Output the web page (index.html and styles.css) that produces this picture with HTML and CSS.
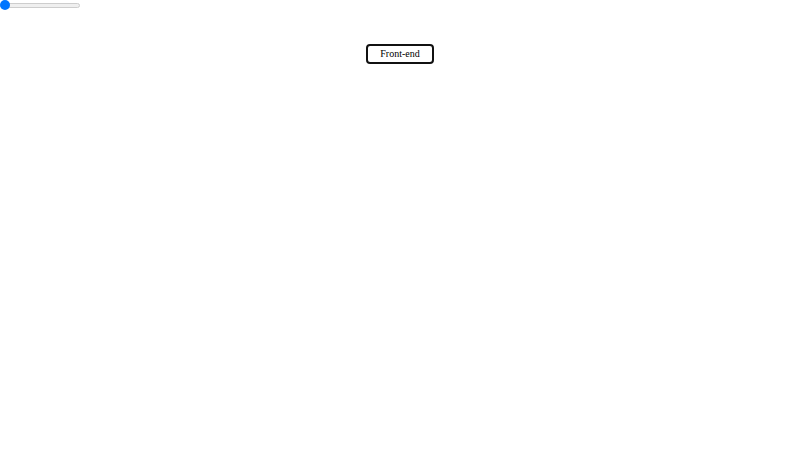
FILE: index.html
```html
<!DOCTYPE html>
<html lang="en">
<head>
  <meta charset="UTF-8" />
  <title>Roadmap</title>
  <meta name="viewport" content="width=device-width, initial-scale=1.0" />
  <link rel="stylesheet" href="styles.css">
</head>
<body>
  <input type="range" class="zoom" min="1" max="10" value="1" aria-label="Zoom">

  <main class="roadmap">
    <button type="button" class="node">Front-end</button>
  </main>
</body>
</html>
```

FILE: styles.css
```css
* {
  margin: 0;
  padding: 0;
  box-sizing: border-box;
}

body {
  font-family: "Liberation Serif", serif;
  background: white;
}

.zoom {
  -webkit-appearance: none;
  appearance: none;
  display: block;
  width: 80px;
  height: 10px;
  background: transparent;
}

.zoom::-webkit-slider-runnable-track {
  height: 5px;
  border: 1px solid #cdcdcd;
  border-radius: 3px;
  background: #efefef;
}

.zoom::-webkit-slider-thumb {
  -webkit-appearance: none;
  width: 10px;
  height: 10px;
  margin-top: -4px;
  margin-left: -1px;
  border-radius: 50%;
  background: #0075ff;
}

.roadmap {
  display: flex;
  justify-content: center;
  padding-top: 34px;
}

.node {
  padding: 0 12px;
  border: 2px solid #111;
  border-radius: 4px;
  background: white;
  color: black;
  font-family: inherit;
  font-size: 10px;
  line-height: 16px;
}
```
